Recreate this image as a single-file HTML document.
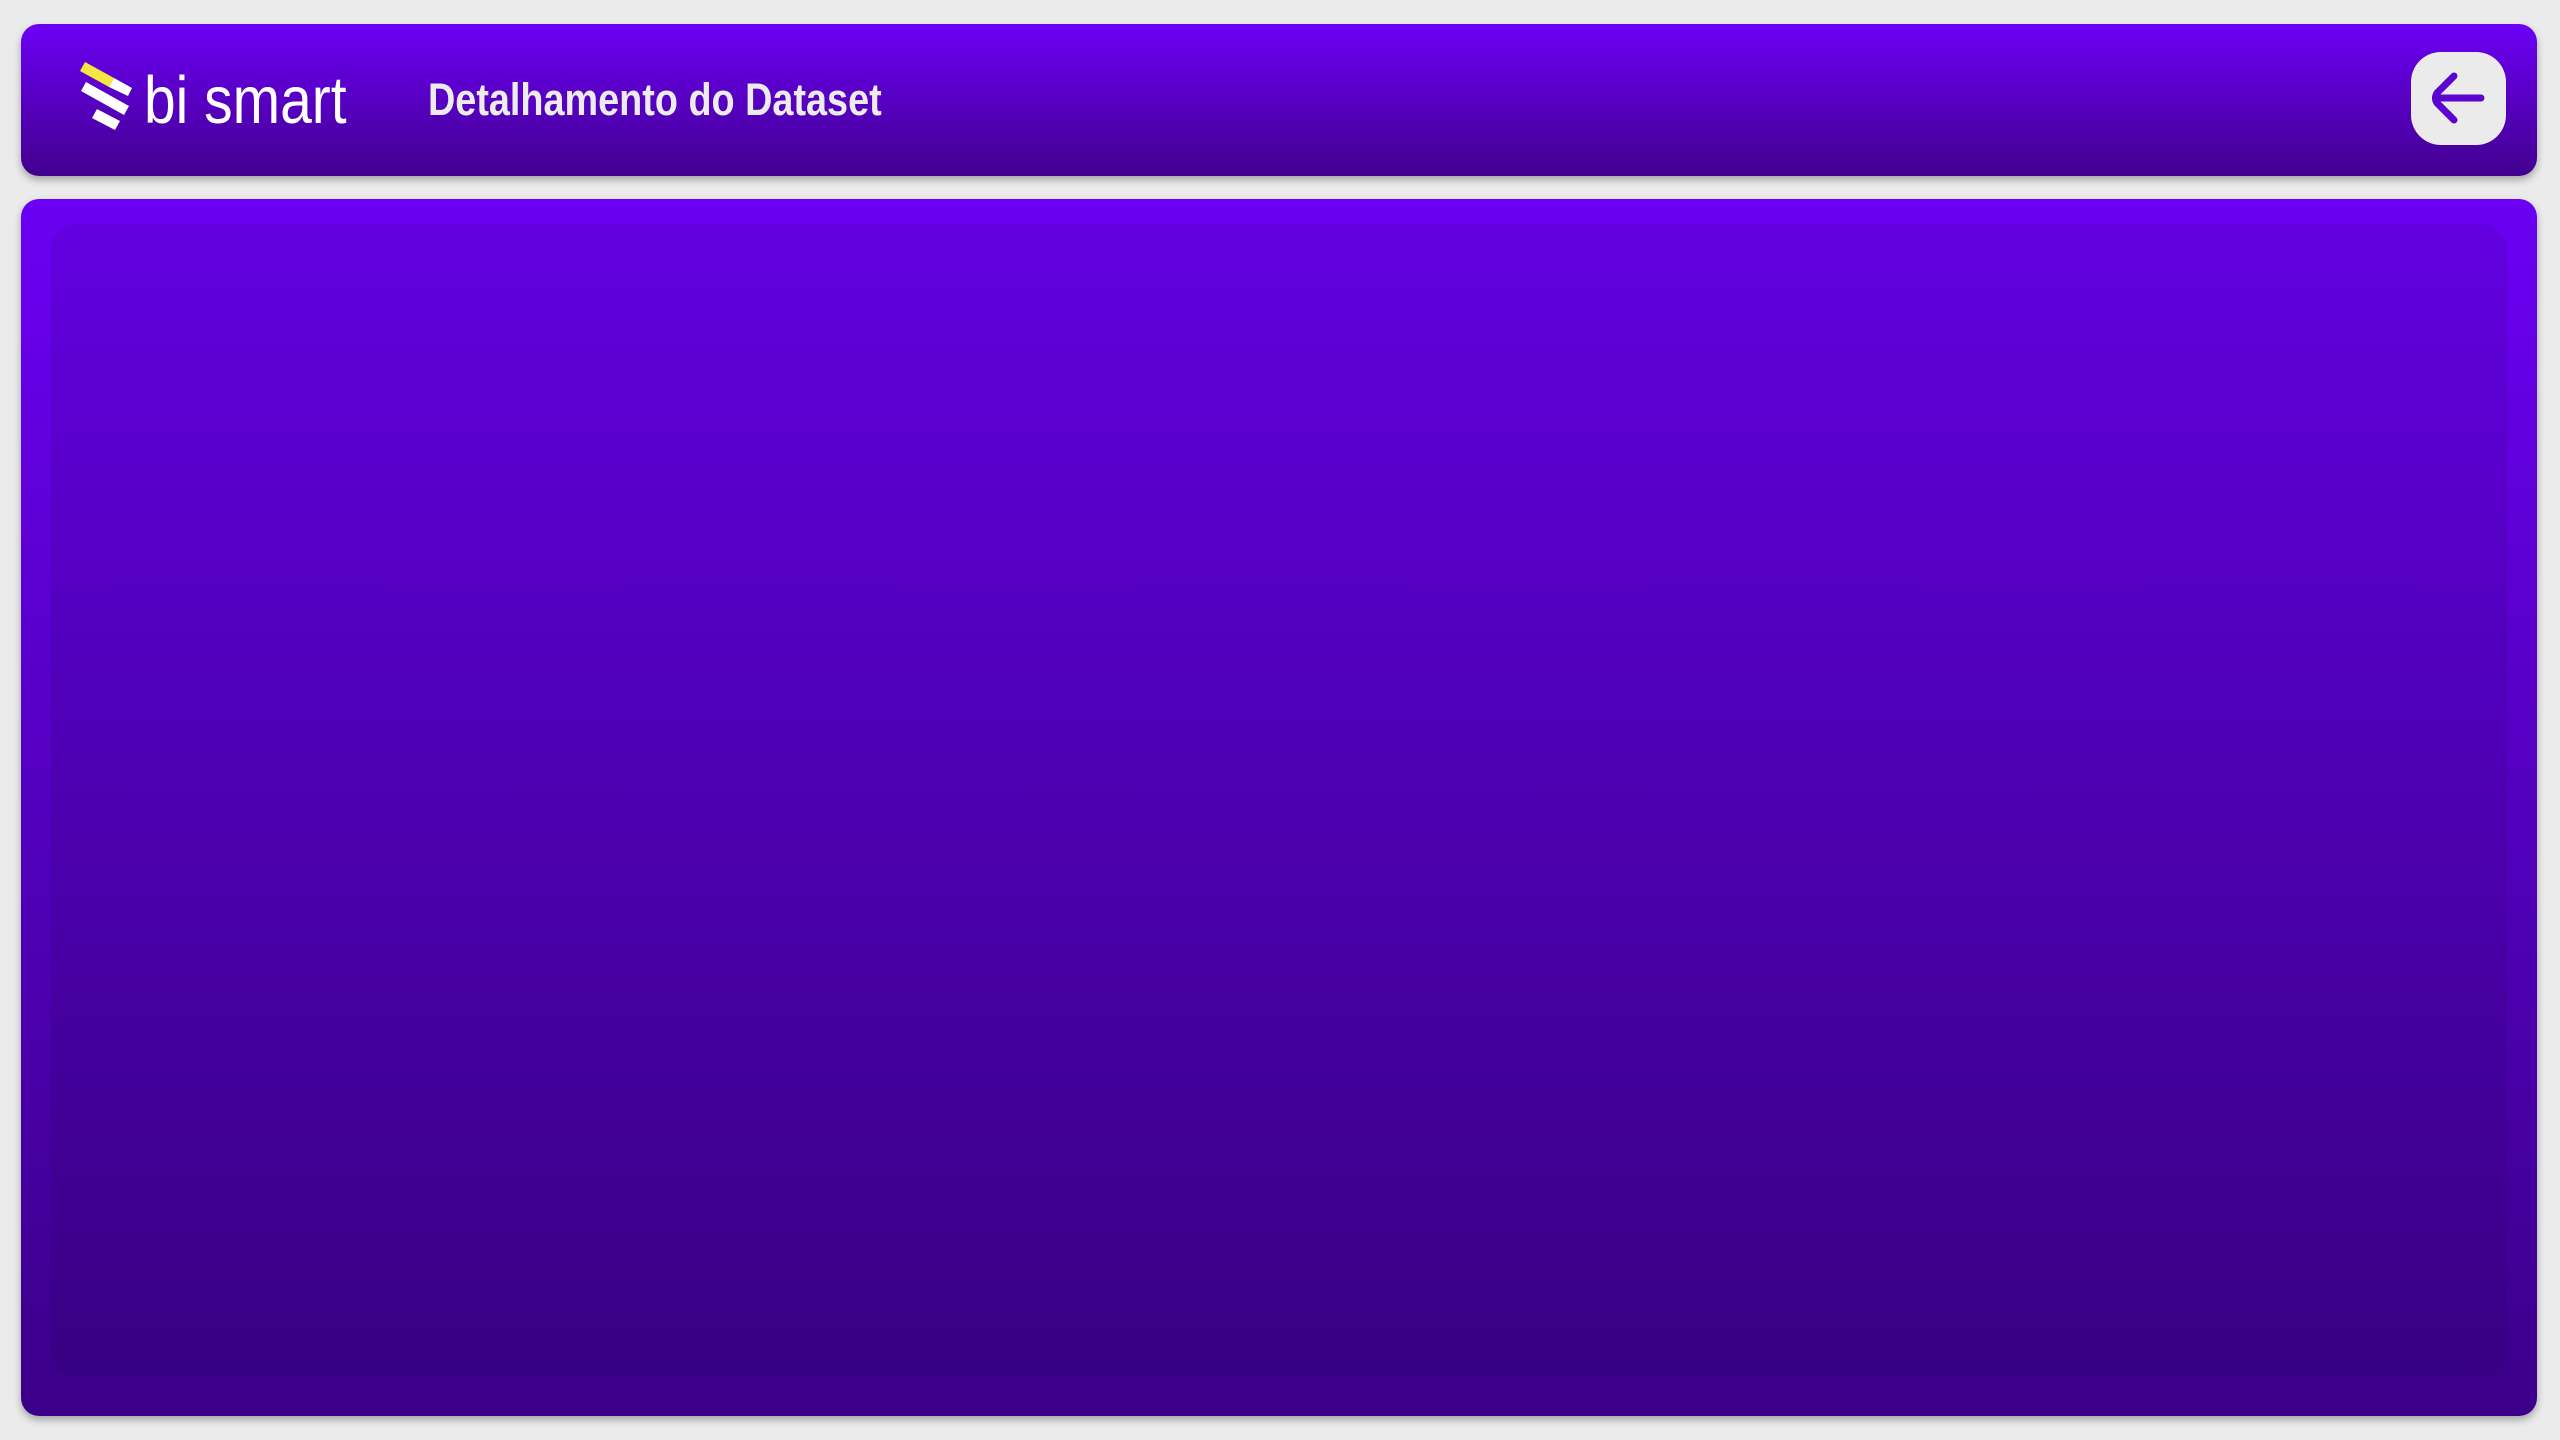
<!DOCTYPE html>
<html><head><meta charset="utf-8"><style>
html,body{margin:0;padding:0;}
body{width:2560px;height:1440px;background:#ebebeb;position:relative;overflow:hidden;font-family:"Liberation Sans",sans-serif;}
.hdr{position:absolute;left:21px;top:24px;width:2516px;height:152px;border-radius:18px;background:linear-gradient(#6c00f5,#42008f);box-shadow:0 4px 8px rgba(0,0,0,0.3);}
.main{position:absolute;left:21px;top:199px;width:2516px;height:1217px;border-radius:18px;background:linear-gradient(#6b00f3,#3b0089);box-shadow:0 4px 8px rgba(0,0,0,0.3);}
.inner{position:absolute;left:30px;top:25px;right:30px;bottom:39px;border-radius:26px;background:rgba(0,0,0,0.07);}
.brand{position:absolute;left:144px;top:67px;color:#fff;font-size:67px;line-height:1;transform:scaleX(0.85);transform-origin:left top;white-space:nowrap;}
.title{position:absolute;left:428px;top:74px;color:#ececec;font-size:45px;font-weight:bold;transform:scaleX(0.84);transform-origin:left top;white-space:nowrap;}
.btn{position:absolute;left:2411px;top:52px;width:95px;height:93px;border-radius:30px;background:#ebebeb;}
</style></head><body>
<div class="hdr"></div>
<div class="main"><div class="inner"></div></div>
<svg style="position:absolute;left:0;top:0" width="200" height="160">
<polygon points="85,62 114,78 109,87 80,71" fill="#f5e642"/>
<polygon points="114,78 132,88 128,96 109,87" fill="#fff"/>
<polygon points="86,82 129,106 124,115 81,91" fill="#fff"/>
<polygon points="97,109 120,121 115,130 92,118" fill="#fff"/>
</svg>
<div class="brand">bi smart</div>
<div class="title">Detalhamento do Dataset</div>
<div class="btn"><svg width="95" height="93" viewBox="0 0 95 93"><path d="M43 24 L26 41 Q23 46 26 51 L43 68 M26 46 H70" fill="none" stroke="#5a06d0" stroke-width="7" stroke-linecap="round" stroke-linejoin="round"/></svg></div>
</body></html>
